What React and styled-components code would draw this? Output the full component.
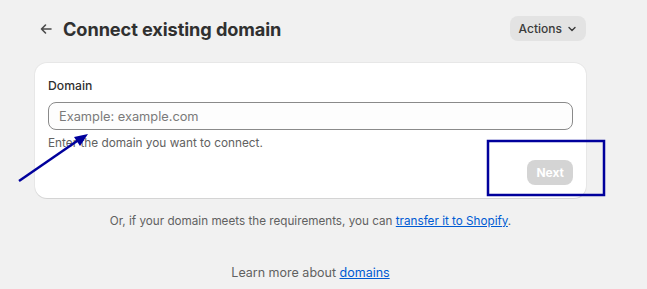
import React from "react";
import styled, { createGlobalStyle } from "styled-components";

const GlobalStyle = createGlobalStyle`
  body {
    margin: 0;
    background: #f1f1f1;
    font-family: Inter, "Noto Sans", sans-serif;
    color: #303030;
  }
`;

const Page = styled.div`
  position: relative;
  width: 647px;
  height: 289px;
  overflow: hidden;
`;

const Column = styled.div`
  width: 551px;
  margin-left: 35px;
  padding-top: 16px;
`;

const Header = styled.div`
  display: flex;
  align-items: center;
  justify-content: space-between;
  height: 25px;
  padding-left: 4px;
`;

const TitleGroup = styled.div`
  display: flex;
  align-items: center;
  gap: 10px;
`;

const BackButton = styled.button`
  border: none;
  background: none;
  padding: 0;
  display: flex;
  color: #4a4a4a;
`;

const Title = styled.h1`
  margin: 0;
  font-size: 18.2px;
  font-weight: 700;
  color: #303030;
  letter-spacing: -0.1px;
`;

const ActionsButton = styled.button`
  display: flex;
  align-items: center;
  gap: 4px;
  height: 25px;
  padding: 0 8px 0 9px;
  border: none;
  border-radius: 8px;
  background: #e3e3e3;
  font-family: inherit;
  font-size: 12px;
  font-weight: 450;
  color: #3a3a3a;
`;

const Card = styled.div`
  margin-top: 22px;
  background: #fff;
  border-radius: 12px;
  box-shadow: 0 1px 0 rgba(0, 0, 0, 0.08), 0 0 0 1px rgba(0, 0, 0, 0.04);
  padding: 15px 13px 13px 13px;
  height: 135px;
  box-sizing: border-box;
  display: flex;
  flex-direction: column;
`;

const Label = styled.label`
  font-size: 12.2px;
  font-weight: 550;
  color: #303030;
  line-height: 16px;
`;

const Input = styled.input`
  margin-top: 8px;
  height: 28px;
  box-sizing: border-box;
  border: 1px solid #8a8a8a;
  border-radius: 8px;
  background: #fdfdfd;
  padding: 0 10px;
  font-family: inherit;
  font-size: 12.8px;
  outline: none;
  &::placeholder {
    color: #7a7a7a;
  }
`;

const Help = styled.p`
  margin: 5px 0 0;
  font-size: 11.8px;
  color: #616161;
  line-height: 16px;
`;

const Footer = styled.div`
  margin-top: auto;
  display: flex;
  justify-content: flex-end;
`;

const NextButton = styled.button`
  height: 25px;
  padding: 0 9px;
  border: none;
  border-radius: 8px;
  background: #d4d4d4;
  color: #fff;
  font-family: inherit;
  font-size: 12px;
  font-weight: 650;
`;

const Note = styled.p`
  margin: 0;
  text-align: center;
  font-size: ${(p) => p.$size}px;
  color: #616161;
  padding-top: ${(p) => p.$top}px;
`;

const Link = styled.a`
  color: #005bd3;
  text-decoration: underline;
`;

const Overlay = styled.svg`
  position: absolute;
  left: 0;
  top: 0;
  pointer-events: none;
`;

export default function App() {
  return (
    <Page>
      <GlobalStyle />
      <Column>
        <Header>
          <TitleGroup>
            <BackButton>
              <svg width="14" height="14" viewBox="0 0 14 14" fill="none">
                <path d="M12 7H2.5M6.5 3L2.5 7l4 4" stroke="currentColor" strokeWidth="1.6" strokeLinecap="round" strokeLinejoin="round" />
              </svg>
            </BackButton>
            <Title>Connect existing domain</Title>
          </TitleGroup>
          <ActionsButton>
            Actions
            <svg width="12" height="12" viewBox="0 0 12 12" fill="none">
              <path d="M3 4.5l3 3 3-3" stroke="currentColor" strokeWidth="1.4" strokeLinecap="round" strokeLinejoin="round" />
            </svg>
          </ActionsButton>
        </Header>
        <Card>
          <Label>Domain</Label>
          <Input placeholder="Example: example.com" />
          <Help>Enter the domain you want to connect.</Help>
          <Footer>
            <NextButton>Next</NextButton>
          </Footer>
        </Card>
        <Note $top={16} $size={11.7}>
          Or, if your domain meets the requirements, you can <Link href="#">transfer it to Shopify</Link>.
        </Note>
        <Note $top={37} $size={12.5}>
          Learn more about <Link href="#">domains</Link>
        </Note>
      </Column>
      <Overlay width="647" height="289">
        <rect x="488" y="141" width="116" height="54" fill="none" stroke="#00009c" strokeWidth="2.5" />
        <line x1="19" y1="181" x2="80" y2="139" stroke="#00009c" strokeWidth="2.5" />
        <polygon points="88,134 74,137 80,146" fill="#00009c" />
      </Overlay>
    </Page>
  );
}
